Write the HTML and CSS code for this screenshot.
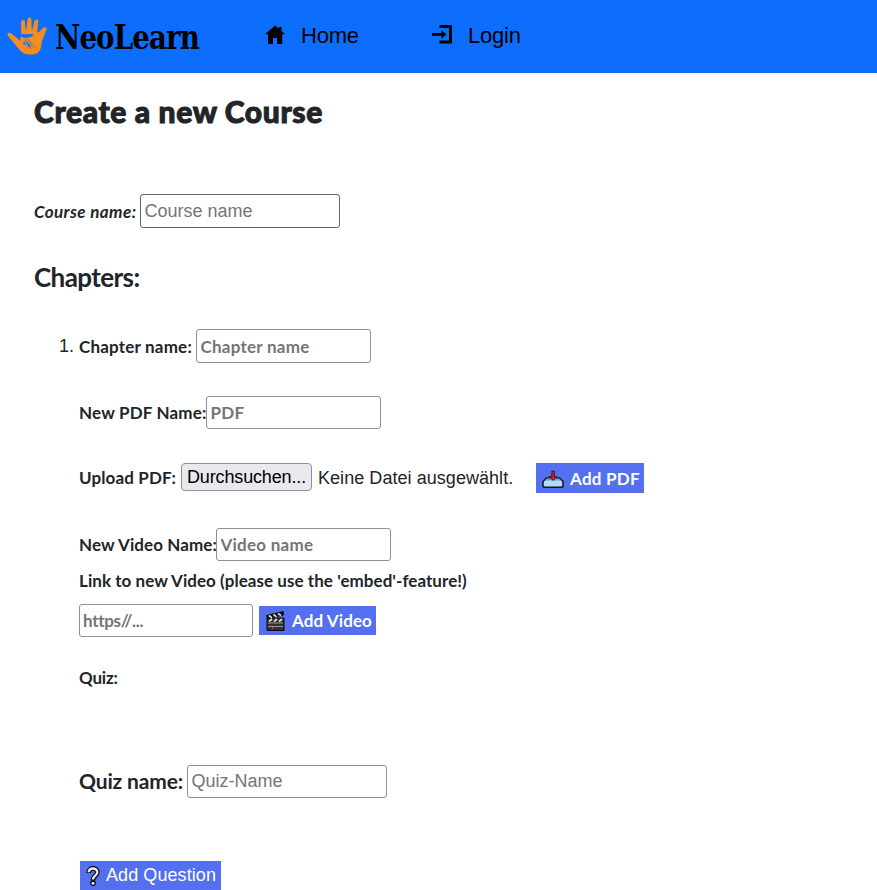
FILE: index.html
```
<!DOCTYPE html>
<html lang="de">
<head>
<meta charset="utf-8">
<title>NeoLearn</title>
<link rel="stylesheet" href="styles.css">
</head>
<body>
<nav class="navbar">
  <a class="brand">
    <svg class="hand" viewBox="0 0 42 40">
      <path d="M14.500 18V5.500Q14.700 3.600 16.400 3.600T18.400 5.500L19 13h.8L21 3Q21.300 1 23.200 1T25 3l.3 10h.8L28.200 4.500Q28.800 2.800 30.500 3.200T31.900 5.200L31 16l1 .7 4.800-5Q38.500 10.500 39.800 11.500T40.200 14L36 24.500l-1.200 7C33.500 36.500 31 39 25 39c-6.500 0-9.500-1.500-13-6L.8 19.800C-.5 17.500 2.300 15.500 4.200 17.200l10 8.300 1.500-.5z"/>
      <path class="gap" d="M14.500 18.200 27 18l-1.500 3.500 4 10.500-6-2.800 1 4.300-5.500-4.500-1.800.2-3-5.500z"/>
      <path d="M14 20.500l5 1.500 7-1.500 3.500 11-5.500-2.500-5.500-4 3.500 5 2 4-5.500-5.500-2-3 .3 4.500-3.300-5z"/>
      <path class="crease" d="m17 23 6 5.500M20 22.500l6 6M17.500 26l4 5.500"/>
    </svg>
    <span class="brand-name">NeoLearn</span>
  </a>
  <a class="nav-link home">
    <svg class="nav-icon" viewBox="0 0 22 22"><path d="M11 1.500 1 10.200h3V20h5v-6h4v6h5.200v-9.800h2.800L17.500 7V3h-2.800v1.700z"/></svg>
    <span>Home</span>
  </a>
  <a class="nav-link login">
    <svg class="nav-icon" viewBox="0 0 22 22"><path d="M8.500 1H21v18.500H8.500v-3H18V4H8.500zM1 9h9.500V6.200l5 4.200-5 4.100v-2.800H1z"/></svg>
    <span>Login</span>
  </a>
</nav>
<main class="page">
  <h1 class="title">Create a new Course</h1>
  <div class="row course-row">
    <label class="label course-label">Course name:</label>
    <input class="field wide dark" placeholder="Course name">
  </div>
  <h2 class="chapters">Chapters:</h2>
  <ol class="chapter-list">
    <li class="chapter">
      <div class="row chapter-row">
        <span class="number">1.</span>
        <label class="label chapter-label">Chapter name:</label>
        <input class="field display" placeholder="Chapter name">
      </div>
      <div class="row pdf-row">
        <label class="label pdf-label">New PDF Name:</label>
        <input class="field display" placeholder="PDF">
      </div>
      <div class="row upload-row">
        <label class="label upload-label">Upload PDF:</label>
        <button class="browse">Durchsuchen...</button>
        <span class="file-state">Keine Datei ausgewählt.</span>
        <button class="action add-pdf">
          <svg class="action-icon" viewBox="0 0 22 20"><path d="M4.500 8h13l3.500 3.500v4.300q0 1.500-2 1.500H3q-2 0-2-1.500v-4.300z" fill="#b4dcf2" stroke="#10151e" stroke-width="1.500"/><path d="M2.500 10.500h17l-2.500-2H5z" fill="#5b9fd0"/><path d="M9.800 1h2.600v5.500h2.300L11.100 10.500 7.300 6.500h2.500z" fill="#cf1726" stroke="#351019" stroke-width=".8"/></svg>
          <span>Add PDF</span>
        </button>
      </div>
      <div class="row video-row">
        <label class="label video-label">New Video Name:</label>
        <input class="field display" placeholder="Video name">
      </div>
      <p class="label link-label">Link to new Video (please use the 'embed'-feature!)</p>
      <div class="row link-row">
        <input class="field display url" placeholder="https//...">
        <button class="action add-video">
          <svg class="action-icon clapper" viewBox="0 0 22 20"><path d="M2 7h17v12.500H2z" fill="#303030" stroke="#080808"/><path d="M1.500 4.500 18 .5l.8 3.300L2.400 8z" fill="#111" stroke="#111"/><path d="m4 4.500 3 2.300M8.500 3.500l3 2.300M13 2.500l3 2M4 10.500l3-2.500M9 10.500l3-2.500M14 10.500l3-2.500" stroke="#ddd" stroke-width="1.700"/><path d="M3 12h15M3 15.500h15" stroke="#999"/><path d="M7.500 16v2.500" stroke="#c33"/></svg>
          <span>Add Video</span>
        </button>
      </div>
      <p class="label quiz-heading">Quiz:</p>
      <div class="row quiz-row">
        <label class="label quiz-label">Quiz name:</label>
        <input class="field wide" placeholder="Quiz-Name">
      </div>
      <button class="action add-question">
        <svg class="question-icon" viewBox="0 0 14 20"><path d="M2.700 7C2.700.8 11.300 1 11.300 6.300 11.300 9.800 7 9.500 7 14.500" fill="none" stroke="#0a0a0a" stroke-width="4.800"/><circle cx="7" cy="17.200" r="2.200" fill="#eee" stroke="#0a0a0a" stroke-width="1.300"/><path d="M2.700 6.200C3 1.200 11.300 1.200 11.300 6.300 11.300 9.800 7 9.500 7 13.500" fill="none" stroke="#eee" stroke-width="2.400"/></svg>
        <span>Add Question</span>
      </button>
    </li>
  </ol>
</main>
</body>
</html>
```
FILE: styles.css
```
* { box-sizing: border-box; }
body {
  margin: 0;
  height: 890px;
  overflow: hidden;
  background: #fff;
  color: #212529;
  font: 18px/27px "Liberation Sans", Arial, sans-serif;
}
.navbar {
  display: flex;
  align-items: flex-start;
  height: 73px;
  background: #0d6efd;
  color: #000;
}
.brand { display: flex; width: 264px; padding: 16px 0 0 7px; }
.hand { flex: none; width: 41px; height: 40px; fill: #f28d1e; }
.hand .gap { fill: #0d6efd; }
.hand .crease { fill: none; stroke: #0d6efd; stroke-width: .8; }
.brand-name {
  margin-left: 7px;
  font: bold 34px/43px "DejaVu Serif Condensed", "DejaVu Serif", serif;
  font-stretch: semi-condensed;
  letter-spacing: -1px;
  transform: scaleX(.905);
  transform-origin: left;
}
.nav-link { display: flex; align-items: center; height: 70px; font-size: 22px; letter-spacing: -.2px; }
.home { width: 167px; }
.nav-icon { width: 22px; height: 22px; margin-right: 15px; fill: #000; }
.page { padding: 0 34px; }
.title, .chapters, .label, .display, .action, .display::placeholder {
  font-family: Lato, "Open Sans", sans-serif;
  font-weight: 700;
}
.title {
  margin: 18px 0 0;
  font-size: 30px;
  line-height: 40px;
  font-weight: 900;
  letter-spacing: .64px;
  -webkit-text-stroke: 1px #212529;
}
.row { display: flex; align-items: center; white-space: nowrap; }
.label { flex: none; margin: 0; font-size: 17px; letter-spacing: .05px; }
.course-row { margin-top: 63px; height: 34px; }
.course-label { width: 106px; font-style: italic; letter-spacing: .42px; }
.field {
  width: 175px;
  height: 33px;
  margin: 0;
  padding: 0 3.5px;
  border: 1px solid #8f8f9d;
  border-radius: 3px;
  background: #fff;
  font-family: "Liberation Sans", Arial, sans-serif;
  font-size: 18px;
}
.field::placeholder { color: #757575; opacity: 1; }
.field.display { font: 700 17px Lato, sans-serif; letter-spacing: .25px; }
.field.url { padding-left: 3px; letter-spacing: -.3px; }
.wide { width: 200px; }
.dark { height: 34px; border-color: #65656f; }
.chapters { margin: 29px 0 0; font-size: 26px; line-height: 40px; letter-spacing: -.6px; }
.chapter-list { list-style: none; margin: 0; padding: 0 0 0 45px; }
.chapter-row { margin-top: 32px; height: 34px; }
.chapter-row .field { height: 34px; }
.number { width: 20px; margin-left: -20px; }
.chapter-label { width: 117px; letter-spacing: .2px; }
.pdf-row { margin-top: 33px; height: 33px; }
.pdf-label { width: 127px; letter-spacing: .18px; }
.upload-row { margin-top: 34px; height: 30px; align-items: flex-start; }
.upload-label { width: 102px; line-height: 30px; letter-spacing: .12px; }
.browse {
  width: 131px;
  height: 28px;
  padding: 0;
  border: 1px solid #8f8f9d;
  border-radius: 4px;
  background: #e9e9ed;
  color: #000;
  font: 18px "Liberation Sans", Arial, sans-serif;
  letter-spacing: -.15px;
}
.file-state { width: 218px; margin-left: 6px; line-height: 30px; letter-spacing: .05px; }
.action {
  display: flex;
  align-items: center;
  height: 29px;
  padding: 0 0 0 6px;
  border: 0;
  background: #5470f0;
  color: #fff;
  font-size: 17px;
  white-space: nowrap;
}
.action-icon { width: 22px; height: 20px; margin-right: 6px; }
.clapper { margin-right: 5px; }
.add-pdf { width: 108px; height: 30px; letter-spacing: .25px; }
.add-pdf .action-icon { margin-top: 4px; }
.video-row { margin-top: 35px; height: 33px; }
.video-label { width: 137px; letter-spacing: .1px; }
.link-label { margin-top: 6px; }
.link-row { margin-top: 10px; height: 33px; }
.link-row .field { width: 174px; }
.add-video { width: 117px; margin-left: 6px; letter-spacing: .1px; }
.quiz-heading { margin-top: 27px; letter-spacing: -.2px; }
.quiz-row { margin-top: 74px; height: 33px; }
.quiz-label { width: 108px; margin-top: -2px; font-size: 21px; letter-spacing: -.15px; }
.add-question {
  width: 141px;
  margin: 63px 0 0 1px;
  font: 18px "Liberation Sans", Arial, sans-serif;
  letter-spacing: .08px;
}
.question-icon { width: 14px; height: 20px; margin-right: 6px; }
```
